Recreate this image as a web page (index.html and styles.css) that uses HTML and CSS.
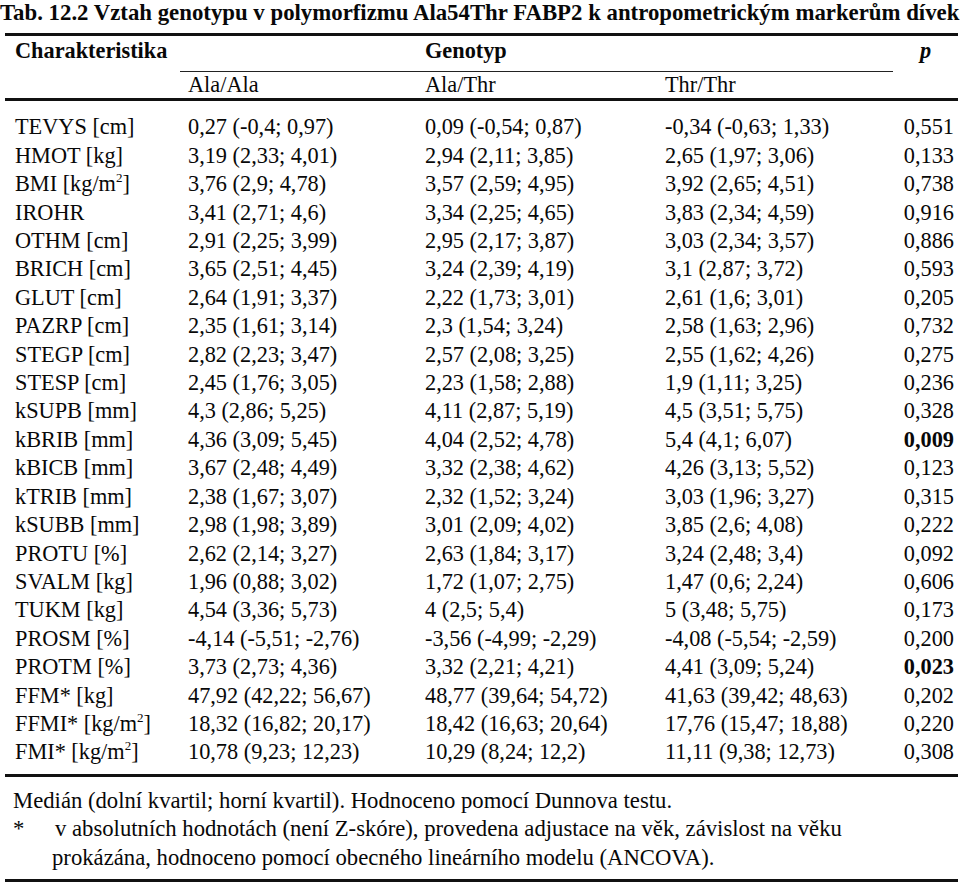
FILE: index.html
```html
<!DOCTYPE html>
<html lang="cs">
<head>
<meta charset="utf-8">
<title>Tab. 12.2</title>
<link rel="stylesheet" href="styles.css">
</head>
<body>
<div class="page">
  <h1 class="title">Tab. 12.2 Vztah genotypu v polymorfizmu Ala54Thr FABP2 k antropometrickým markerům dívek</h1>
  <table class="tbl">
    <colgroup>
      <col class="c-name"><col class="c-g1"><col class="c-g2"><col class="c-g3"><col class="c-p">
    </colgroup>
    <thead>
      <tr class="h1">
        <th class="name" rowspan="2">Charakteristika</th>
        <th class="geno" colspan="3"><span class="geno-label">Genotyp</span></th>
        <th class="pcol" rowspan="2"><i>p</i></th>
      </tr>
      <tr class="h2">
        <th class="sub">Ala/Ala</th>
        <th class="sub">Ala/Thr</th>
        <th class="sub">Thr/Thr</th>
      </tr>
    </thead>
    <tbody>
      <tr><td class="name">TEVYS [cm]</td><td>0,27 (-0,4; 0,97)</td><td>0,09 (-0,54; 0,87)</td><td>-0,34 (-0,63; 1,33)</td><td class="p">0,551</td></tr>
      <tr><td class="name">HMOT [kg]</td><td>3,19 (2,33; 4,01)</td><td>2,94 (2,11; 3,85)</td><td>2,65 (1,97; 3,06)</td><td class="p">0,133</td></tr>
      <tr><td class="name">BMI [kg/m<sup>2</sup>]</td><td>3,76 (2,9; 4,78)</td><td>3,57 (2,59; 4,95)</td><td>3,92 (2,65; 4,51)</td><td class="p">0,738</td></tr>
      <tr><td class="name">IROHR</td><td>3,41 (2,71; 4,6)</td><td>3,34 (2,25; 4,65)</td><td>3,83 (2,34; 4,59)</td><td class="p">0,916</td></tr>
      <tr><td class="name">OTHM [cm]</td><td>2,91 (2,25; 3,99)</td><td>2,95 (2,17; 3,87)</td><td>3,03 (2,34; 3,57)</td><td class="p">0,886</td></tr>
      <tr><td class="name">BRICH [cm]</td><td>3,65 (2,51; 4,45)</td><td>3,24 (2,39; 4,19)</td><td>3,1 (2,87; 3,72)</td><td class="p">0,593</td></tr>
      <tr><td class="name">GLUT [cm]</td><td>2,64 (1,91; 3,37)</td><td>2,22 (1,73; 3,01)</td><td>2,61 (1,6; 3,01)</td><td class="p">0,205</td></tr>
      <tr><td class="name">PAZRP [cm]</td><td>2,35 (1,61; 3,14)</td><td>2,3 (1,54; 3,24)</td><td>2,58 (1,63; 2,96)</td><td class="p">0,732</td></tr>
      <tr><td class="name">STEGP [cm]</td><td>2,82 (2,23; 3,47)</td><td>2,57 (2,08; 3,25)</td><td>2,55 (1,62; 4,26)</td><td class="p">0,275</td></tr>
      <tr><td class="name">STESP [cm]</td><td>2,45 (1,76; 3,05)</td><td>2,23 (1,58; 2,88)</td><td>1,9 (1,11; 3,25)</td><td class="p">0,236</td></tr>
      <tr><td class="name">kSUPB [mm]</td><td>4,3 (2,86; 5,25)</td><td>4,11 (2,87; 5,19)</td><td>4,5 (3,51; 5,75)</td><td class="p">0,328</td></tr>
      <tr><td class="name">kBRIB [mm]</td><td>4,36 (3,09; 5,45)</td><td>4,04 (2,52; 4,78)</td><td>5,4 (4,1; 6,07)</td><td class="p"><b>0,009</b></td></tr>
      <tr><td class="name">kBICB [mm]</td><td>3,67 (2,48; 4,49)</td><td>3,32 (2,38; 4,62)</td><td>4,26 (3,13; 5,52)</td><td class="p">0,123</td></tr>
      <tr><td class="name">kTRIB [mm]</td><td>2,38 (1,67; 3,07)</td><td>2,32 (1,52; 3,24)</td><td>3,03 (1,96; 3,27)</td><td class="p">0,315</td></tr>
      <tr><td class="name">kSUBB [mm]</td><td>2,98 (1,98; 3,89)</td><td>3,01 (2,09; 4,02)</td><td>3,85 (2,6; 4,08)</td><td class="p">0,222</td></tr>
      <tr><td class="name">PROTU [%]</td><td>2,62 (2,14; 3,27)</td><td>2,63 (1,84; 3,17)</td><td>3,24 (2,48; 3,4)</td><td class="p">0,092</td></tr>
      <tr><td class="name">SVALM [kg]</td><td>1,96 (0,88; 3,02)</td><td>1,72 (1,07; 2,75)</td><td>1,47 (0,6; 2,24)</td><td class="p">0,606</td></tr>
      <tr><td class="name">TUKM [kg]</td><td>4,54 (3,36; 5,73)</td><td>4 (2,5; 5,4)</td><td>5 (3,48; 5,75)</td><td class="p">0,173</td></tr>
      <tr><td class="name">PROSM [%]</td><td>-4,14 (-5,51; -2,76)</td><td>-3,56 (-4,99; -2,29)</td><td>-4,08 (-5,54; -2,59)</td><td class="p">0,200</td></tr>
      <tr><td class="name">PROTM [%]</td><td>3,73 (2,73; 4,36)</td><td>3,32 (2,21; 4,21)</td><td>4,41 (3,09; 5,24)</td><td class="p"><b>0,023</b></td></tr>
      <tr><td class="name">FFM* [kg]</td><td>47,92 (42,22; 56,67)</td><td>48,77 (39,64; 54,72)</td><td>41,63 (39,42; 48,63)</td><td class="p">0,202</td></tr>
      <tr><td class="name">FFMI* [kg/m<sup>2</sup>]</td><td>18,32 (16,82; 20,17)</td><td>18,42 (16,63; 20,64)</td><td>17,76 (15,47; 18,88)</td><td class="p">0,220</td></tr>
      <tr><td class="name">FMI* [kg/m<sup>2</sup>]</td><td>10,78 (9,23; 12,23)</td><td>10,29 (8,24; 12,2)</td><td>11,11 (9,38; 12,73)</td><td class="p">0,308</td></tr>
    </tbody>
  </table>
  <div class="notes">
    <p class="note">Medián (dolní kvartil; horní kvartil). Hodnoceno pomocí Dunnova testu.</p>
    <div class="fn">
      <span class="fn-mark">*</span>
      <p class="fn-text">v absolutních hodnotách (není Z-skóre), provedena adjustace na věk, závislost na věku prokázána, hodnoceno pomocí obecného lineárního modelu (ANCOVA).</p>
    </div>
  </div>
</div>
</body>
</html>
```

FILE: styles.css
```css
html, body {
  margin: 0;
  padding: 0;
  background: #fff;
}

body {
  font-family: "Liberation Serif", "Times New Roman", serif;
  color: #080808;
  font-size: 22.3px;
}

.page {
  width: 960px;
}

.title {
  margin: 0 0 7px 0;
  font-size: 22.8px;
  line-height: 26px;
  font-weight: bold;
  white-space: nowrap;
}

.tbl {
  margin-left: 5px;
  width: 953px;
  border-collapse: collapse;
  table-layout: fixed;
  border-top: 3px solid #111;
  border-bottom: 3px solid #111;
}

.c-name { width: 175px; }
.c-g1 { width: 237px; }
.c-g2 { width: 240px; }
.c-g3 { width: 236px; }
.c-p { width: 65px; }

.tbl th, .tbl td {
  padding: 0 0 0 8px;
  text-align: left;
  white-space: nowrap;
  font-weight: normal;
  line-height: 28.4px;
  vertical-align: top;
}

.tbl th.name, .tbl td.name {
  padding-left: 10px;
}

.tbl thead .h1 th {
  font-weight: bold;
  padding-top: 1px;
  padding-bottom: 6px;
}

.tbl th.geno {
  border-bottom: 1px solid #222;
  padding-left: 245px;
}

.tbl th.pcol {
  text-align: center;
  padding-left: 0;
}

.tbl thead .h2 th {
  line-height: 26px;
}

.tbl thead {
  border-bottom: 3px solid #111;
}

.tbl td.p {
  text-align: right;
  padding-left: 0;
  padding-right: 4px;
}

.tbl tbody tr:first-child td {
  padding-top: 12px;
}

.tbl tbody tr:last-child td {
  padding-bottom: 7px;
}

.tbl sup {
  font-size: 13px;
  line-height: 0;
  vertical-align: 9px;
}

.notes {
  box-sizing: border-box;
  margin-left: 5px;
  width: 953px;
  padding: 10px 0 7px 8px;
  border-bottom: 3px solid #111;
}

.note, .fn-text {
  margin: 0;
  font-size: 22.7px;
  line-height: 28.4px;
}

.fn {
  display: flex;
}

.fn-mark {
  flex: 0 0 39px;
  font-size: 22.7px;
  line-height: 28.4px;
}

.fn-text {
  width: 840px;
  text-indent: 3px;
}
```
